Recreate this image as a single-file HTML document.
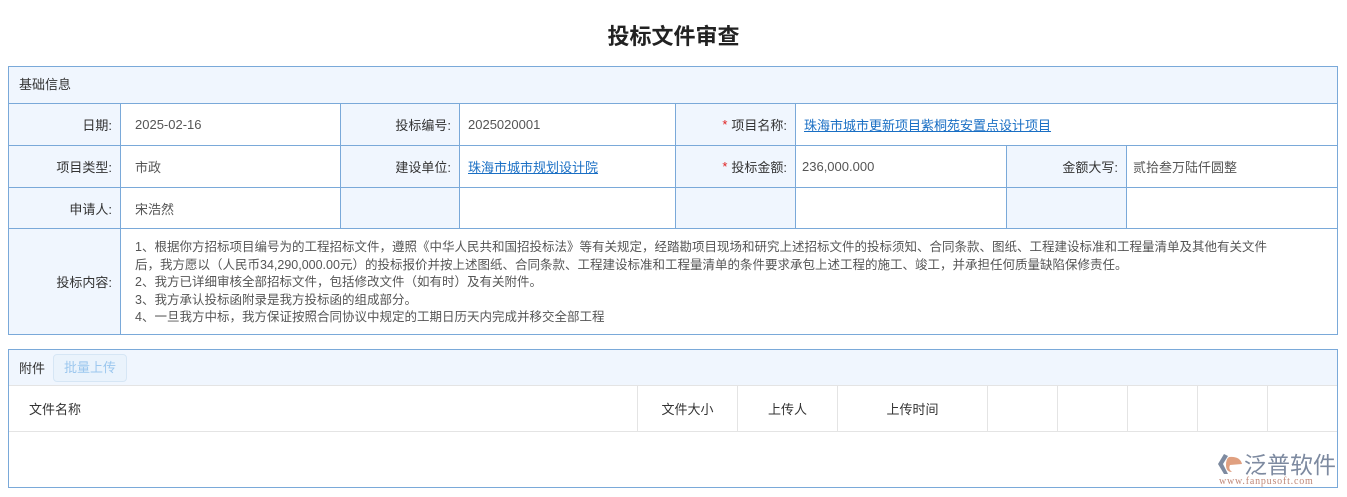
<!DOCTYPE html><html><head><meta charset="utf-8"><style>
body{margin:0;width:1347px;height:497px;background:#fff;font-family:"Liberation Sans","Noto Sans CJK SC",sans-serif;font-size:13px;color:#333;position:relative;overflow:hidden}
.a{position:absolute;box-sizing:border-box}
.c{position:absolute;box-sizing:border-box;border-right:1px solid #7aa9d9;border-bottom:1px solid #7aa9d9;display:flex;align-items:center;padding:0 8px}
.l{background:#f0f6fe;justify-content:flex-end}
.v{background:#fff;padding-left:8px;color:#555}
a{color:#1a6fc4;text-decoration:underline}
.r{color:#e02020;margin-right:4px}
.h{position:absolute;top:386px;height:45px;border-right:1px solid #e4e4e4;display:flex;align-items:center;justify-content:center;font-size:13px;color:#333;box-sizing:border-box}
</style></head><body>
<div class="a" style="left:0;top:19px;width:1347px;text-align:center;font-size:22px;font-weight:bold;color:#222">投标文件审查</div>
<div class="a" style="left:8px;top:66px;width:1330px;height:269px;border:1px solid #7aa9d9;border-right:none;border-bottom:none"></div>
<div class="c" style="left:9px;top:67px;width:1329px;height:37px;background:#f0f6fe;padding-left:10px;padding-bottom:3px">基础信息</div>
<div class="c l" style="left:9px;top:104px;width:112px;height:42px">日期:</div>
<div class="c v" style="left:121px;top:104px;width:220px;height:42px;padding-left:14px">2025-02-16</div>
<div class="c l" style="left:341px;top:104px;width:119px;height:42px">投标编号:</div>
<div class="c v" style="left:460px;top:104px;width:216px;height:42px">2025020001</div>
<div class="c l" style="left:676px;top:104px;width:120px;height:42px"><span class="r">*</span>项目名称:</div>
<div class="c v" style="left:796px;top:104px;width:542px;height:42px"><a>珠海市城市更新项目紫桐苑安置点设计项目</a></div>
<div class="c l" style="left:9px;top:146px;width:112px;height:42px">项目类型:</div>
<div class="c v" style="left:121px;top:146px;width:220px;height:42px;padding-left:14px">市政</div>
<div class="c l" style="left:341px;top:146px;width:119px;height:42px">建设单位:</div>
<div class="c v" style="left:460px;top:146px;width:216px;height:42px"><a>珠海市城市规划设计院</a></div>
<div class="c l" style="left:676px;top:146px;width:120px;height:42px"><span class="r">*</span>投标金额:</div>
<div class="c v" style="left:796px;top:146px;width:211px;height:42px;padding-left:6px">236,000.000</div>
<div class="c l" style="left:1007px;top:146px;width:120px;height:42px">金额大写:</div>
<div class="c v" style="left:1127px;top:146px;width:211px;height:42px;padding-left:6px">贰拾叁万陆仟圆整</div>
<div class="c l" style="left:9px;top:188px;width:112px;height:41px">申请人:</div>
<div class="c v" style="left:121px;top:188px;width:220px;height:41px;padding-left:14px">宋浩然</div>
<div class="c l" style="left:341px;top:188px;width:119px;height:41px"></div>
<div class="c v" style="left:460px;top:188px;width:216px;height:41px"></div>
<div class="c l" style="left:676px;top:188px;width:120px;height:41px"></div>
<div class="c v" style="left:796px;top:188px;width:211px;height:41px"></div>
<div class="c l" style="left:1007px;top:188px;width:120px;height:41px"></div>
<div class="c v" style="left:1127px;top:188px;width:211px;height:41px"></div>
<div class="c l" style="left:9px;top:229px;width:112px;height:106px">投标内容:</div>
<div class="c v" style="left:121px;top:229px;width:1217px;height:106px;padding:10px 62px 0 14px;line-height:17.5px;font-size:12.5px;display:block">1、根据你方招标项目编号为的工程招标文件，遵照《中华人民共和国招投标法》等有关规定，经踏勘项目现场和研究上述招标文件的投标须知、合同条款、图纸、工程建设标准和工程量清单及其他有关文件后，我方愿以（人民币34,290,000.00元）的投标报价并按上述图纸、合同条款、工程建设标准和工程量清单的条件要求承包上述工程的施工、竣工，并承担任何质量缺陷保修责任。<br>2、我方已详细审核全部招标文件，包括修改文件（如有时）及有关附件。<br>3、我方承认投标函附录是我方投标函的组成部分。<br>4、一旦我方中标，我方保证按照合同协议中规定的工期日历天内完成并移交全部工程</div>
<div class="a" style="left:8px;top:349px;width:1330px;height:139px;border:1px solid #7aa9d9"></div>
<div class="a" style="left:9px;top:350px;width:1328px;height:36px;background:#f0f6fe;border-bottom:1px solid #e4e4e4"></div>
<div class="a" style="left:19px;top:358px">附件</div>
<div class="a" style="left:53px;top:354px;width:74px;height:28px;border:1px solid #d6e6f5;border-radius:4px;background:#eaf3fc;color:#9cc7ee;text-align:center;line-height:26px">批量上传</div>
<div class="a" style="left:9px;top:431px;width:1328px;height:1px;background:#e4e4e4"></div>
<div class="h" style="left:9px;width:629px;justify-content:flex-start;padding-left:20px">文件名称</div>
<div class="h" style="left:638px;width:100px">文件大小</div>
<div class="h" style="left:738px;width:100px">上传人</div>
<div class="h" style="left:838px;width:150px">上传时间</div>
<div class="h" style="left:988px;width:70px"></div>
<div class="h" style="left:1058px;width:70px"></div>
<div class="h" style="left:1128px;width:70px"></div>
<div class="h" style="left:1198px;width:70px"></div>
<svg class="a" style="left:1216px;top:452px" width="28" height="24" viewBox="0 0 28 24"><path d="M8 2 L2 12 L8 22 L12 22 L7 12 L12 4Z" fill="#7d8aa0"/><path d="M13 5 Q24 4 26 12 L14 13 Q12 17 16 20 Q10 20 10 13 Q10 7 13 5Z" fill="#e0a080"/></svg>
<div class="a" style="left:1244px;top:449px;font-size:23px;color:#7d8aa0;font-family:'Noto Sans CJK SC',sans-serif;line-height:28px">泛普软件</div>
<div class="a" style="left:1219px;top:476px;font-size:10px;color:#c08878;font-family:'Liberation Serif',serif;letter-spacing:0.8px">www.fanpusoft.com</div>
</body></html>
